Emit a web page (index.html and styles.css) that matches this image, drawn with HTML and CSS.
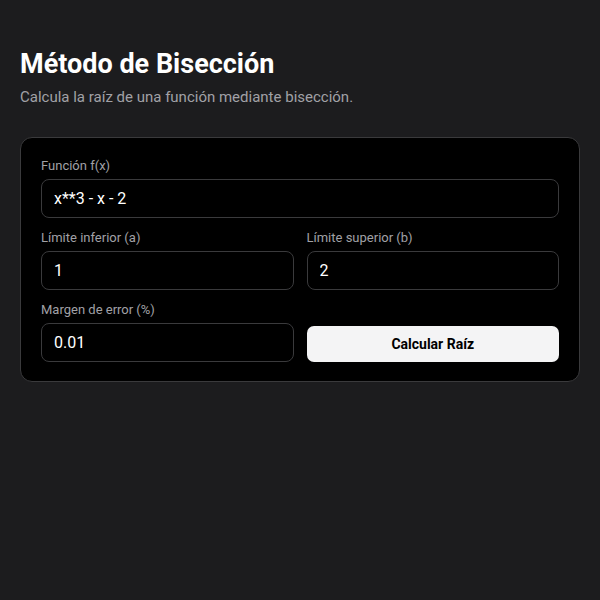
FILE: index.html
```html
<!DOCTYPE html>
<html lang="es">
<head>
    <meta charset="UTF-8">
    <meta name="viewport" content="width=device-width, initial-scale=1.0">
    <title>Método de Bisección</title>
    <link rel="stylesheet" href="styles.css">
</head>
<body>
    <div class="page">
        <h1>Método de Bisección</h1>
        <p class="subtitle">Calcula la raíz de una función mediante bisección.</p>

        <form class="card" onsubmit="return false;">
            <div class="field full">
                <label for="fx">Función f(x)</label>
                <input id="fx" type="text" value="x**3 - x - 2">
            </div>
            <div class="field">
                <label for="a">Límite inferior (a)</label>
                <input id="a" type="text" value="1">
            </div>
            <div class="field">
                <label for="b">Límite superior (b)</label>
                <input id="b" type="text" value="2">
            </div>
            <div class="field">
                <label for="err">Margen de error (%)</label>
                <input id="err" type="text" value="0.01">
            </div>
            <button class="calc-btn" type="submit">Calcular Raíz</button>
        </form>
    </div>
</body>
</html>
```

FILE: styles.css
```css
* {
    margin: 0;
    padding: 0;
    box-sizing: border-box;
}

body {
    font-family: Roboto, 'Liberation Sans', sans-serif;
    background: #1c1c1e;
    color: #fff;
    min-height: 100vh;
}

.page {
    padding: 48px 20px;
}

h1 {
    font-size: 27px;
    font-weight: 700;
    line-height: 32px;
}

.subtitle {
    font-size: 15px;
    line-height: 20px;
    color: #a1a1a6;
    margin-top: 7px;
}

.card {
    margin-top: 30px;
    background: #000;
    border: 1px solid #3a3a3c;
    border-radius: 12px;
    padding: 19px 20px;
    display: grid;
    grid-template-columns: 1fr 1fr;
    column-gap: 13px;
    row-gap: 11px;
}

.field {
    display: flex;
    flex-direction: column;
    gap: 4px;
}

.field.full {
    grid-column: 1 / -1;
}

label {
    font-size: 13px;
    line-height: 18px;
    color: #a1a1a6;
}

input {
    height: 39px;
    background: #000;
    border: 1px solid #3a3a3c;
    border-radius: 8px;
    padding: 0 12px;
    color: #fff;
    font-family: inherit;
    font-size: 16px;
    outline: none;
}

.calc-btn {
    align-self: end;
    height: 36px;
    background: #f4f4f5;
    color: #000;
    border: none;
    border-radius: 7px;
    font-family: inherit;
    font-size: 14px;
    font-weight: 700;
    cursor: pointer;
}
```
